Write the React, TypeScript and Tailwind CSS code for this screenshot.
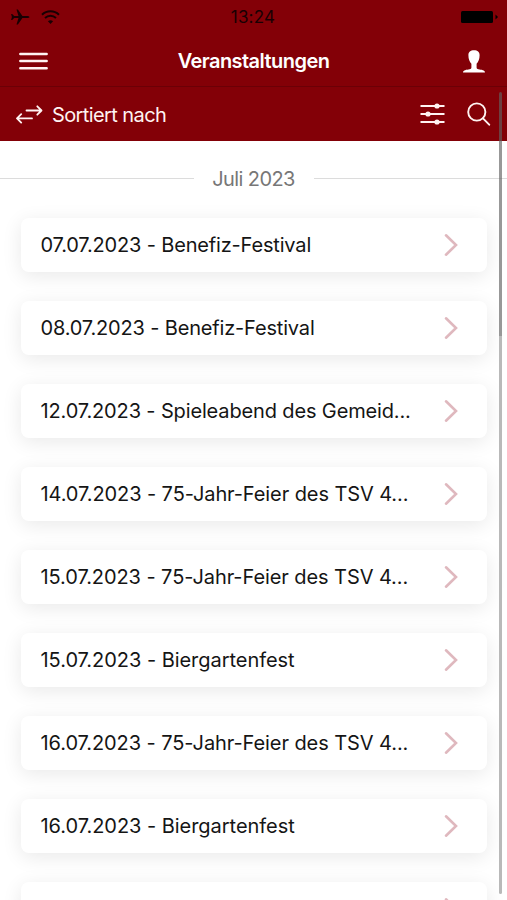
import type { ReactNode } from "react";

const events = [
  { date: "07.07.2023", title: "Benefiz-Festival", tracking: "tracking-[-0.17px]" },
  { date: "08.07.2023", title: "Benefiz-Festival", tracking: "tracking-[-0.17px]" },
  { date: "12.07.2023", title: "Spieleabend des Gemeid...", tracking: "tracking-[-0.14px]" },
  { date: "14.07.2023", title: "75-Jahr-Feier des TSV 4...", tracking: "tracking-[-0.09px]" },
  { date: "15.07.2023", title: "75-Jahr-Feier des TSV 4...", tracking: "tracking-[-0.08px]" },
  { date: "15.07.2023", title: "Biergartenfest", tracking: "tracking-[-0.04px]" },
  { date: "16.07.2023", title: "75-Jahr-Feier des TSV 4...", tracking: "tracking-[-0.08px]" },
  { date: "16.07.2023", title: "Biergartenfest", tracking: "tracking-[-0.04px]" }
];

function StatusBar() {
  return (
    <div className="grid h-[34px] grid-cols-3 items-center pl-[10px] pr-[8px] text-[#180003]">
      <div className="flex items-center gap-[11px]">
        <svg width="20" height="16" viewBox="0 0 20 16" fill="currentColor">
          <path d="M19.5 8c0-.7-1.2-1.1-2.4-1.1h-4.7L7.9.4H6.5l2 6.5H4.2L2.2 5H1.1l.8 3-.8 3h1.1l2-1.9h4.3l-2 6.5h1.4l4.5-6.5h4.7c1.2 0 2.4-.4 2.4-1.1Z" />
        </svg>
        <svg width="19" height="15" viewBox="0 0 19 15" fill="none" stroke="currentColor" strokeWidth="2">
          <path d="M1 4.7c4.8-4.6 12.2-4.6 17 0" />
          <path d="M4 8.1c3.2-3 7.8-3 11 0" />
          <path d="M6.9 11.3c1.6-1.5 3.6-1.5 5.2 0L9.5 14Z" fill="currentColor" stroke="none" />
        </svg>
      </div>
      <span className="-ml-[3px] pt-px text-center text-[17px] leading-none tracking-[0.2px]">13:24</span>
      <svg className="justify-self-end" width="39" height="14" viewBox="0 0 39 14" fill="#000">
        <rect x="1" y="1" width="32" height="12" rx="1.5" />
        <path d="M35.5 4.5 38 7l-2.5 2.5Z" />
      </svg>
    </div>
  );
}

function NavBar() {
  return (
    <div className="grid h-[53px] grid-cols-[60px_1fr_60px] items-center border-b border-[#6b0006] pt-[2px] text-white">
      <svg className="ml-[19px]" width="29" height="20" viewBox="0 0 29 20" stroke="#fff3f2" strokeWidth="2.6" strokeLinecap="round">
        <path d="M1.4 3h26.2M1.4 10h26.2M1.4 17.2h26.2" />
      </svg>
      <h1 className="text-center text-[20px] font-semibold tracking-[-0.55px]">Veranstaltungen</h1>
      <svg className="ml-[16px]" width="22" height="23" viewBox="0 0 22 23" fill="#fff">
        <path d="M11 .3c-3.6 0-5.6 1.9-5.6 4.9 0 3.8 1.3 6.7 3 8.5v3.9c0 1-.7 1.5-1.8 1.7C3.4 19.9.2 20 0 22.5h22c-.2-2.5-3.4-2.6-6.6-3.2-1.1-.2-1.8-.7-1.8-1.7v-3.9c1.7-1.8 3-4.7 3-8.5 0-3-2-4.9-5.6-4.9Z" />
      </svg>
    </div>
  );
}

function SortBar() {
  return (
    <div className="flex h-[54px] items-center pl-4 pr-[16px] text-[#fff3f2]">
      <svg width="27" height="19" viewBox="0 0 27 19" fill="none" stroke="currentColor" strokeWidth="1.8" strokeLinecap="round" strokeLinejoin="round">
        <path d="M10.5 5.5H25M21.3 1.3l4.2 4.2-4.2 4.2" />
        <path d="M16 13.4H1.5M5.2 9.2 1 13.4l4.2 4.2" />
      </svg>
      <span className="ml-[9px] pt-[2px] text-[20px] tracking-[-0.6px]">Sortiert nach</span>
      <svg className="ml-auto" width="25" height="22" viewBox="0 0 25 22" stroke="currentColor" strokeWidth="2" fill="currentColor">
        <path d="M.5 3h24M.5 11h24M.5 19h24" />
        <g stroke="none">
          <circle cx="17" cy="3" r="2.6" />
          <circle cx="8" cy="11" r="2.6" />
          <circle cx="17" cy="19" r="2.6" />
        </g>
      </svg>
      <svg className="ml-[22px]" width="24" height="24" viewBox="0 0 24 24" fill="none" stroke="currentColor" strokeWidth="1.9" strokeLinecap="round">
        <circle cx="9.8" cy="10" r="8.6" />
        <path d="m16 16.4 6.2 6.3" />
      </svg>
    </div>
  );
}

function MonthDivider({ label }: { label: string }) {
  return (
    <div className="flex h-[77px] shrink-0 items-center pb-[2px] text-[#777]">
      <span className="h-px flex-1 bg-[#dcdcdc]" />
      <span className="w-[120px] text-center text-[20px] tracking-[-0.6px]">{label}</span>
      <span className="h-px flex-1 bg-[#dcdcdc]" />
    </div>
  );
}

function EventRow({ children }: { children?: ReactNode }) {
  return (
    <li className="flex h-[54px] shrink-0 items-center rounded-[8px] bg-white pl-5 pr-[29px] shadow-[0_4px_20px_rgba(0,0,0,0.09)]">
      {children}
      <svg className="ml-auto" width="14" height="24" viewBox="0 0 14 24" fill="none" stroke="#dfb8be" strokeWidth="2.6" strokeLinecap="round">
        <path d="m2 2.3 10 9.7L2 21.7" />
      </svg>
    </li>
  );
}

export default function App() {
  return (
    <main className="relative flex h-[900px] w-[507px] flex-col overflow-hidden bg-white font-['Inter','Liberation_Sans',sans-serif]">
      <header className="shrink-0 bg-[#830007]">
        <StatusBar />
        <NavBar />
        <SortBar />
      </header>
      <MonthDivider label="Juli 2023" />
      <ul className="flex flex-col gap-[29px] pl-[20.5px] pr-[20px]">
        {events.map((event) => (
          <EventRow key={event.date + event.title}>
            <span className={`whitespace-nowrap text-[20px] text-[#151515] ${event.tracking}`}>
              {event.date} - {event.title}
            </span>
          </EventRow>
        ))}
        <EventRow />
      </ul>
      {/* scroll indicator */}
      <div className="absolute right-[5px] top-[92px] flex h-[802px] w-[3px] flex-col overflow-hidden rounded-full">
        <span className="h-[244px] bg-[#616161]/65" />
        <span className="flex-1 bg-[#b9b9b9]" />
      </div>
    </main>
  );
}
